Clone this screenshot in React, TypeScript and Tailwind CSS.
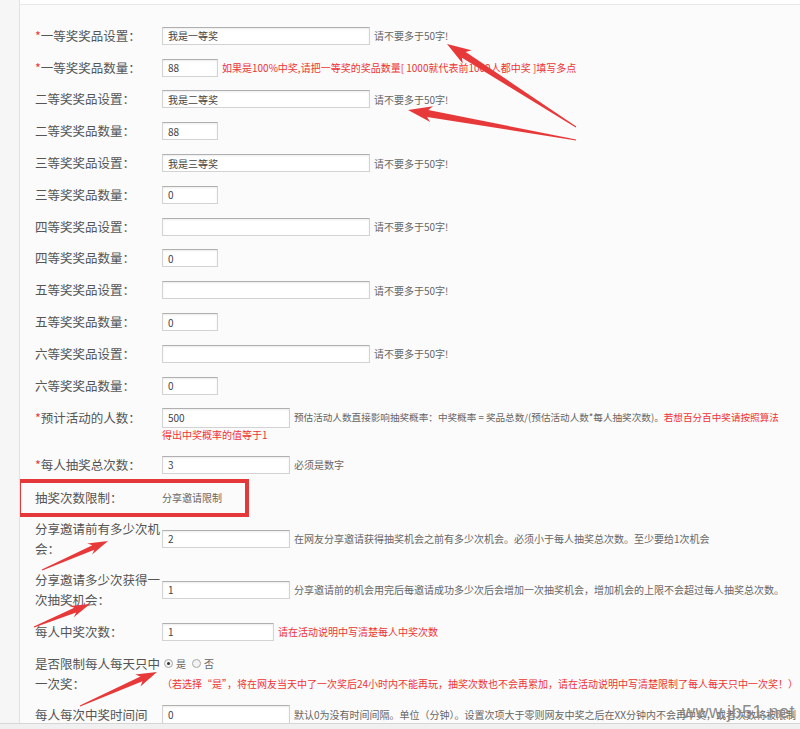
import React from 'react'

type Row = {
    label: string
    req?: boolean
    value: string
    wide?: boolean
    note?: string
    red?: boolean
}

const prizeRows: Row[] = [
    { label: '一等奖奖品设置：', req: true, value: '我是一等奖', wide: true, note: '请不要多于50字!' },
    { label: '一等奖奖品数量：', req: true, value: '88', note: '如果是100%中奖,请把一等奖的奖品数量[ 1000就代表前1000人都中奖 ]填写多点', red: true },
    { label: '二等奖奖品设置：', value: '我是二等奖', wide: true, note: '请不要多于50字!' },
    { label: '二等奖奖品数量：', value: '88' },
    { label: '三等奖奖品设置：', value: '我是三等奖', wide: true, note: '请不要多于50字!' },
    { label: '三等奖奖品数量：', value: '0' },
    { label: '四等奖奖品设置：', value: '', wide: true, note: '请不要多于50字!' },
    { label: '四等奖奖品数量：', value: '0' },
    { label: '五等奖奖品设置：', value: '', wide: true, note: '请不要多于50字!' },
    { label: '五等奖奖品数量：', value: '0' },
    { label: '六等奖奖品设置：', value: '', wide: true, note: '请不要多于50字!' },
    { label: '六等奖奖品数量：', value: '0' },
]

const inputCls =
    'shrink-0 bg-white border border-[#d3d3d3] border-t-[#b0b0b0] shadow-[inset_0_1px_2px_rgba(0,0,0,0.08)] px-[5px] text-[10px] text-[#444] outline-none'

const Label = ({ text, req }: { text: string; req?: boolean }) => (
    <div className="w-[127px] shrink-0 leading-[20px]">
        {req && <span className="text-[#e33]">*</span>}
        {text}
    </div>
)

// tapered red arrow as a polygon, tail -> tip
const arrowPoints = (tx: number, ty: number, hx: number, hy: number, headLen: number, headW: number, shaftW: number) => {
    const dx = hx - tx
    const dy = hy - ty
    const len = Math.hypot(dx, dy)
    const ux = dx / len
    const uy = dy / len
    const nx = -uy
    const ny = ux
    const bx = hx - ux * headLen
    const by = hy - uy * headLen
    const wx = bx - ux * 4
    const wy = by - uy * 4
    const pts = [
        [tx + nx * 0.5, ty + ny * 0.5],
        [bx + nx * shaftW / 2, by + ny * shaftW / 2],
        [wx + nx * headW / 2, wy + ny * headW / 2],
        [hx, hy],
        [wx - nx * headW / 2, wy - ny * headW / 2],
        [bx - nx * shaftW / 2, by - ny * shaftW / 2],
        [tx - nx * 0.5, ty - ny * 0.5],
    ]
    return pts.map((p) => p.join(',')).join(' ')
}

const Radio = ({ checked }: { checked?: boolean }) => (
    <span className="w-[9px] h-[9px] rounded-full border border-[#a8a8a8] bg-[#f3f3f3] flex items-center justify-center">
        {checked && <span className="w-[3px] h-[3px] rounded-full bg-[#333]" />}
    </span>
)

export default function App() {
    return (
        <div className="relative w-[800px] h-[729px] overflow-hidden bg-[#f0f0f0] text-[12.5px] text-[#555] font-['Noto_Sans_CJK_SC','Microsoft_YaHei',sans-serif]">
            <div className="flex h-[724px] border-b border-[#d6d6d6] bg-white">
                <div className="w-[20px] shrink-0 bg-[#f6f6f6] border-r border-[#e2e2e2]" />
                <div className="flex-1 mt-[4px] border-t border-[#e8e8e8] bg-[#fbfbfb] pt-[15px] overflow-hidden">
                    {prizeRows.map((r) => (
                        <div key={r.label} className="flex items-center h-[31.8px] pl-[15px]">
                            <Label text={r.label} req={r.req} />
                            <input
                                readOnly
                                defaultValue={r.value}
                                className={`${inputCls} h-[18px] ${r.wide ? 'w-[208px]' : 'w-[56px]'}`}
                            />
                            {r.note && (
                                <span className={`ml-[4px] text-[10px] whitespace-nowrap ${r.red ? 'text-[#e33]' : 'text-[#666]'}`}>
                                    {r.note}
                                </span>
                            )}
                        </div>
                    ))}

                    <div className="flex items-start pl-[15px] mt-[6px]">
                        <Label text="预计活动的人数：" req />
                        <div className="flex flex-col">
                            <div className="flex items-center h-[20px]">
                                <input readOnly defaultValue="500" className={`${inputCls} h-[20px] w-[128px]`} />
                                <span className="ml-[4px] text-[9.6px] text-[#666] whitespace-nowrap">
                                    预估活动人数直接影响抽奖概率：中奖概率 = 奖品总数/(预估活动人数*每人抽奖次数)。
                                    <span className="text-[#e33]">若想百分百中奖请按照算法</span>
                                </span>
                            </div>
                            <div className="text-[10px] leading-[14px] text-[#e33]">得出中奖概率的值等于1</div>
                        </div>
                    </div>

                    <div className="flex items-center pl-[15px] mt-[13px]">
                        <Label text="每人抽奖总次数：" req />
                        <input readOnly defaultValue="3" className={`${inputCls} h-[18px] w-[128px]`} />
                        <span className="ml-[4px] text-[10px] text-[#666]">必须是数字</span>
                    </div>

                    <div className="flex items-center -ml-[3px] mt-[4px] w-[232px] h-[38px] border-[4px] border-[#e5383b] pl-[14px]">
                        <Label text="抽奖次数限制：" />
                        <span className="text-[10px] text-[#666] whitespace-nowrap">分享邀请限制</span>
                    </div>

                    <div className="flex items-center pl-[15px] mt-[2px]">
                        <Label text="分享邀请前有多少次机会：" />
                        <input readOnly defaultValue="2" className={`${inputCls} h-[18px] w-[128px]`} />
                        <span className="ml-[4px] text-[10px] text-[#666] whitespace-nowrap">
                            在网友分享邀请获得抽奖机会之前有多少次机会。必须小于每人抽奖总次数。至少要给1次机会
                        </span>
                    </div>

                    <div className="flex items-center pl-[15px] mt-[11px]">
                        <Label text="分享邀请多少次获得一次抽奖机会：" />
                        <input readOnly defaultValue="1" className={`${inputCls} h-[18px] w-[128px]`} />
                        <span className="ml-[4px] text-[10px] text-[#666] whitespace-nowrap">
                            分享邀请前的机会用完后每邀请成功多少次后会增加一次抽奖机会，增加机会的上限不会超过每人抽奖总次数。
                        </span>
                    </div>

                    <div className="flex items-center pl-[15px] mt-[12px]">
                        <Label text="每人中奖次数：" />
                        <input readOnly defaultValue="1" className={`${inputCls} h-[18px] w-[112px]`} />
                        <span className="ml-[4px] text-[10px] text-[#e33] whitespace-nowrap">请在活动说明中写清楚每人中奖次数</span>
                    </div>

                    <div className="flex items-start pl-[15px] mt-[12px]">
                        <Label text="是否限制每人每天只中一次奖：" />
                        <div className="flex flex-col">
                            <div className="flex items-center h-[20px] gap-[3px] text-[10px] text-[#666]">
                                <span className="ml-[2px]"><Radio checked /></span>
                                <span className="mr-[3px]">是</span>
                                <Radio />
                                <span>否</span>
                            </div>
                            <div className="h-[20px] leading-[20px] text-[10px] text-[#e33] whitespace-nowrap">
                                （若选择“是”，将在网友当天中了一次奖后24小时内不能再玩，抽奖次数也不会再累加，请在活动说明中写清楚限制了每人每天只中一次奖！）
                            </div>
                        </div>
                    </div>

                    <div className="flex items-start pl-[15px] mt-[11px]">
                        <Label text="每人每次中奖时间间隔：" />
                        <div className="flex items-center h-[20px]">
                            <input readOnly defaultValue="0" className={`${inputCls} h-[19px] w-[128px]`} />
                            <span className="ml-[4px] text-[10px] text-[#666] whitespace-nowrap">
                                默认0为没有时间间隔。单位（分钟）。设置次项大于零则网友中奖之后在XX分钟内不会再中奖，或者次数将被限制
                            </span>
                        </div>
                    </div>
                </div>
            </div>

            <svg className="absolute inset-0 pointer-events-none" width="800" height="729">
                <g fill="#e8393a">
                    <polygon points={arrowPoints(576, 127, 447, 44, 20, 16, 7)} />
                    <polygon points={arrowPoints(576, 140, 408, 110, 20, 16, 7)} />
                    <polygon points={arrowPoints(42, 570, 108, 541, 16, 12, 5)} />
                    <polygon points={arrowPoints(34, 627, 90, 604, 16, 12, 5)} />
                    <polygon points={arrowPoints(80, 706, 157, 672, 17, 13, 5)} />
                </g>
            </svg>

            <div className="absolute left-[682px] top-[701px] text-[18px] leading-[22px] text-[#8c8c8c] font-['Liberation_Sans',sans-serif] tracking-[0.5px]">
                www.jb51.net
            </div>
        </div>
    )
}
